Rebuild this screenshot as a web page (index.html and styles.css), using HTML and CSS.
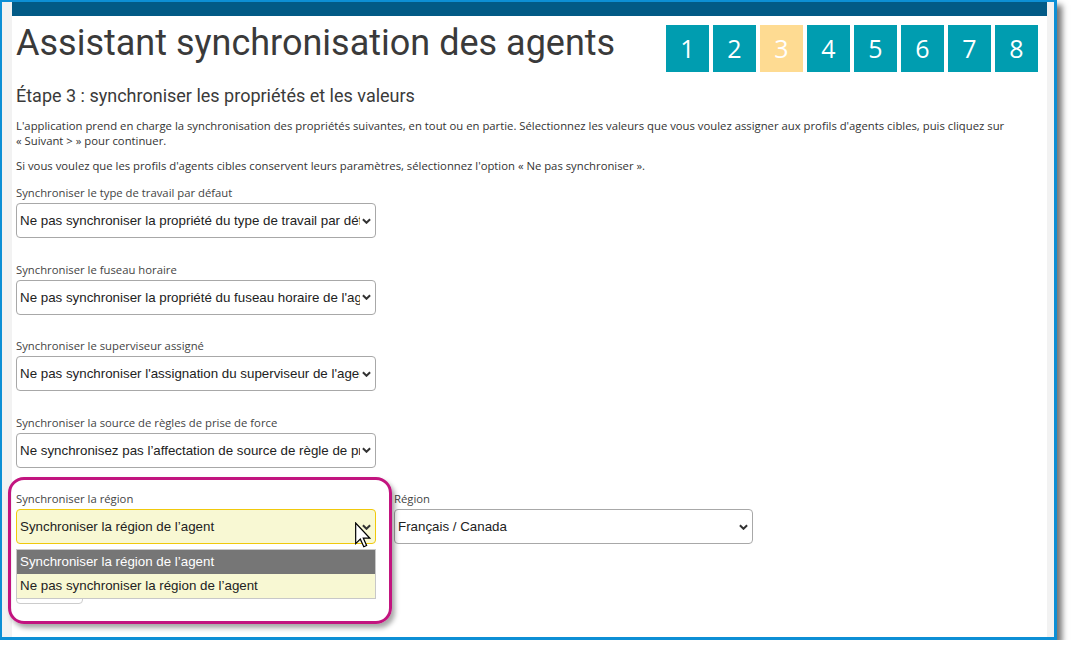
FILE: index.html
```html
<!DOCTYPE html>
<html lang="fr">
<head>
<meta charset="utf-8">
<title>Assistant synchronisation des agents</title>
<link rel="stylesheet" href="styles.css">
</head>
<body>
<div class="frame">
  <div class="strip strip-left"></div>
  <main class="main">
    <div class="topbar"></div>
    <div class="content">
      <header class="header">
        <h1 class="title">Assistant synchronisation des agents</h1>
        <ol class="steps">
          <li class="step">1</li>
          <li class="step">2</li>
          <li class="step step-active">3</li>
          <li class="step">4</li>
          <li class="step">5</li>
          <li class="step">6</li>
          <li class="step">7</li>
          <li class="step">8</li>
        </ol>
      </header>
      <h2 class="subtitle">Étape 3 : synchroniser les propriétés et les valeurs</h2>
      <p class="intro">L'application prend en charge la synchronisation des propriétés suivantes, en tout ou en partie. Sélectionnez les valeurs que vous voulez assigner aux profils d'agents cibles, puis cliquez sur «&nbsp;Suivant&nbsp;&gt;&nbsp;» pour continuer.</p>
      <p class="intro">Si vous voulez que les profils d'agents cibles conservent leurs paramètres, sélectionnez l'option «&nbsp;Ne pas synchroniser&nbsp;».</p>

      <div class="field">
        <label class="label">Synchroniser le type de travail par défaut</label>
        <div class="select"><span class="select-text">Ne pas synchroniser la propriété du type de travail par défaut de l'agent</span><svg class="chev" viewBox="0 0 10 6"><path d="M1 1 L5 5 L9 1"/></svg></div>
      </div>
      <div class="field">
        <label class="label">Synchroniser le fuseau horaire</label>
        <div class="select"><span class="select-text">Ne pas synchroniser la propriété du fuseau horaire de l'agent</span><svg class="chev" viewBox="0 0 10 6"><path d="M1 1 L5 5 L9 1"/></svg></div>
      </div>
      <div class="field">
        <label class="label">Synchroniser le superviseur assigné</label>
        <div class="select"><span class="select-text">Ne pas synchroniser l'assignation du superviseur de l'agent</span><svg class="chev" viewBox="0 0 10 6"><path d="M1 1 L5 5 L9 1"/></svg></div>
      </div>
      <div class="field">
        <label class="label">Synchroniser la source de règles de prise de force</label>
        <div class="select"><span class="select-text">Ne synchronisez pas l’affectation de source de règle de prise de force</span><svg class="chev" viewBox="0 0 10 6"><path d="M1 1 L5 5 L9 1"/></svg></div>
      </div>

      <div class="field-row">
        <div class="field field-open">
          <label class="label">Synchroniser la région</label>
          <div class="select select-focus"><span class="select-text">Synchroniser la région de l’agent</span><svg class="chev" viewBox="0 0 10 6"><path d="M1 1 L5 5 L9 1"/></svg></div>
          <ul class="dropdown">
            <li class="option option-selected">Synchroniser la région de l’agent</li>
            <li class="option">Ne pas synchroniser la région de l’agent</li>
          </ul>
        </div>
        <div class="field field-region">
          <label class="label">Région</label>
          <div class="select"><span class="select-text">Français / Canada</span><svg class="chev" viewBox="0 0 10 6"><path d="M1 1 L5 5 L9 1"/></svg></div>
        </div>
      </div>
      <button class="btn" type="button" aria-label="Appliquer"></button>
    </div>
  </main>
  <div class="strip strip-right"></div>
  <div class="callout"></div>
  <svg class="cursor" viewBox="0 0 12 19"><path d="M0.5 0.5 V16 L4 12.6 L6.6 18.3 L8.7 17.4 L6.2 11.8 H11 Z"/></svg>
</div>
</body>
</html>
```

FILE: styles.css
```css
html, body {
  margin: 0;
  padding: 0;
  background: #ffffff;
}

.frame {
  position: relative;
  display: flex;
  box-sizing: border-box;
  width: 1057px;
  height: 640px;
  border-style: solid;
  border-color: #0d8fd5;
  border-width: 2px 3px 3px 2px;
  background: #ffffff;
  box-shadow: 5px 5px 6px rgba(0, 0, 0, 0.55);
}

.strip {
  flex: none;
  background: #f2f2f2;
}
.strip-left { width: 10px; }
.strip-right { width: 7px; }

.main {
  flex: 1;
  min-width: 0;
  display: flex;
  flex-direction: column;
  overflow: hidden;
}

.topbar {
  flex: none;
  height: 14px;
  background: #025a86;
}

.content {
  padding: 9px 9px 0 4px;
}

.header {
  display: flex;
  justify-content: space-between;
  align-items: flex-start;
}

.title {
  margin: 0;
  font: 400 36px/37px Roboto, "Noto Sans", sans-serif;
  color: #3a3a3a;
}

.steps {
  display: flex;
  gap: 4px;
  list-style: none;
  margin: 0;
  padding: 0;
}

.step {
  width: 43px;
  height: 47px;
  background: #009db0;
  color: #ffffff;
  font: 400 25px/47px "Open Sans", sans-serif;
  text-align: center;
}

.step-active {
  background: #fedb92;
}

.subtitle {
  margin: 12px 0 0;
  font: 400 18px/24px Roboto, "Noto Sans", sans-serif;
  color: #3a3a3a;
}

.intro {
  margin: 10px 0 0;
  font: 400 11.3px/15px "Open Sans", sans-serif;
  color: #333333;
}

.intro + .intro {
  margin-top: 10px;
}

.field {
  margin-top: 23.5px;
}

.intro + .field {
  margin-top: 12px;
}

.label {
  display: block;
  margin-bottom: 2px;
  font: 400 11.3px/16px "Open Sans", sans-serif;
  color: #444444;
}

.select {
  box-sizing: border-box;
  display: flex;
  align-items: center;
  width: 360px;
  height: 35px;
  padding: 0 3px;
  border: 1px solid #a8a8a8;
  border-radius: 4px;
  background: #ffffff;
  font: 400 13.33px "Liberation Sans", Arial, sans-serif;
  color: #222222;
}

.select-text {
  flex: 1;
  min-width: 0;
  overflow: hidden;
  white-space: nowrap;
}

.chev {
  flex: none;
  width: 9px;
  height: 6px;
  margin: 0 1px 0 2px;
  fill: none;
  stroke: #333333;
  stroke-width: 2.2;
}

.select-focus {
  background: #f8f8d3;
  border-color: #f0c90c;
}

.field-row {
  display: flex;
  gap: 18px;
  margin-top: 23.5px;
}

.field-row .field {
  margin-top: 0;
}

.field-open {
  position: relative;
  z-index: 2;
}

.field-region .select {
  width: 359px;
}

.dropdown {
  position: absolute;
  left: 0;
  top: calc(100% + 5px);
  box-sizing: border-box;
  width: 360px;
  margin: 0;
  padding: 0;
  list-style: none;
  border: 1px solid #c8c8c8;
  background: #f8f8d3;
  font: 400 13.33px "Liberation Sans", Arial, sans-serif;
  color: #222222;
}

.option {
  height: 24px;
  line-height: 24px;
  padding: 0 3px;
  white-space: nowrap;
}

.option-selected {
  background: #767676;
  color: #ffffff;
}

.btn {
  display: block;
  width: 67px;
  height: 34px;
  margin-top: 26px;
  border: 1px solid #cccccc;
  border-radius: 4px;
  background: #ffffff;
}

.callout {
  position: absolute;
  left: 6px;
  top: 475px;
  width: 384px;
  height: 147px;
  box-sizing: border-box;
  border: 3px solid #c2147f;
  border-radius: 16px;
  box-shadow: 3px 4px 5px rgba(0, 0, 0, 0.35);
  pointer-events: none;
  z-index: 3;
}

.cursor {
  position: absolute;
  left: 353px;
  top: 520px;
  width: 16px;
  height: 26px;
  fill: #ffffff;
  stroke: #000000;
  stroke-width: 0.9;
  stroke-linejoin: miter;
  z-index: 4;
}
```
